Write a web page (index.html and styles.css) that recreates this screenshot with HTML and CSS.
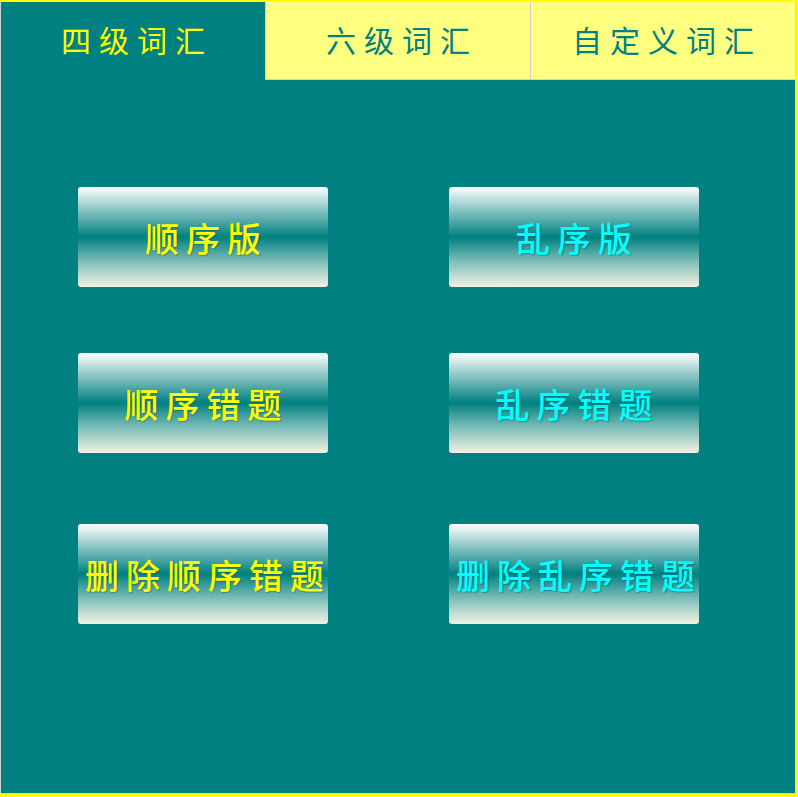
FILE: index.html
```html
<!DOCTYPE html>
<html lang="zh-CN">

<head>
    <meta charset="UTF-8">
    <meta name="viewport" content="width=device-width, initial-scale=1.0">
    <title>词汇练习</title>
    <link rel="stylesheet" href="styles.css">
</head>

<body>
    <div class="app">
        <div class="tabs">
            <div class="tab active">四级词汇</div>
            <div class="tab">六级词汇</div>
            <div class="tab">自定义词汇</div>
        </div>
        <div class="panel">
            <div class="row row-1">
                <button class="btn order">顺序版</button>
                <button class="btn random">乱序版</button>
            </div>
            <div class="row row-2">
                <button class="btn order">顺序错题</button>
                <button class="btn random">乱序错题</button>
            </div>
            <div class="row row-3">
                <button class="btn order">删除顺序错题</button>
                <button class="btn random">删除乱序错题</button>
            </div>
        </div>
    </div>
</body>

</html>
```

FILE: styles.css
```css
body {
    margin: 0;
    padding: 0;
    background-color: #ffff00;
    font-family: "KaiTi", "Noto Sans CJK SC", sans-serif;
}

.app {
    margin-top: 2px;
    width: 794px;
    height: 791px;
    background-color: #008080;
    border-left: 1px solid #d4d4d4;
    border-right: 1px solid #d4d4d4;
    border-bottom: 1px solid #d4d4d4;
    display: flex;
    flex-direction: column;
}

.tabs {
    display: flex;
    height: 78px;
}

.tab {
    flex: 1;
    display: flex;
    justify-content: center;
    align-items: center;
    background-color: #ffff80;
    color: #008080;
    font-size: 30px;
    letter-spacing: 8px;
    padding: 0 0 4px 8px;
    border-left: 1px solid #d0d0d0;
    border-bottom: 1px solid #d0d0d0;
    box-sizing: border-box;
}

.tab.active {
    background-color: #008080;
    color: #ffff00;
    border: none;
}

.panel {
    padding: 107px 0 0 77px;
}

.row {
    display: flex;
    gap: 121px;
}

.row-2 {
    margin-top: 66px;
}

.row-3 {
    margin-top: 71px;
}

.btn {
    width: 250px;
    height: 100px;
    border: none;
    border-radius: 3px;
    background: linear-gradient(to bottom, #ffffff 0%, #7fbfbf 25%, #008080 50%, #80bfbb 75%, #f2f2e2 100%);
    font-family: "KaiTi", "Noto Sans CJK SC", sans-serif;
    font-size: 34px;
    font-weight: 500;
    letter-spacing: 7px;
    padding: 0 0 0 7px;
    white-space: nowrap;
    text-shadow: 1px 1px 1px rgba(0, 60, 60, 0.35);
    cursor: pointer;
}

.btn.order {
    color: #ffff00;
}

.btn.random {
    color: #00ffff;
}
```
